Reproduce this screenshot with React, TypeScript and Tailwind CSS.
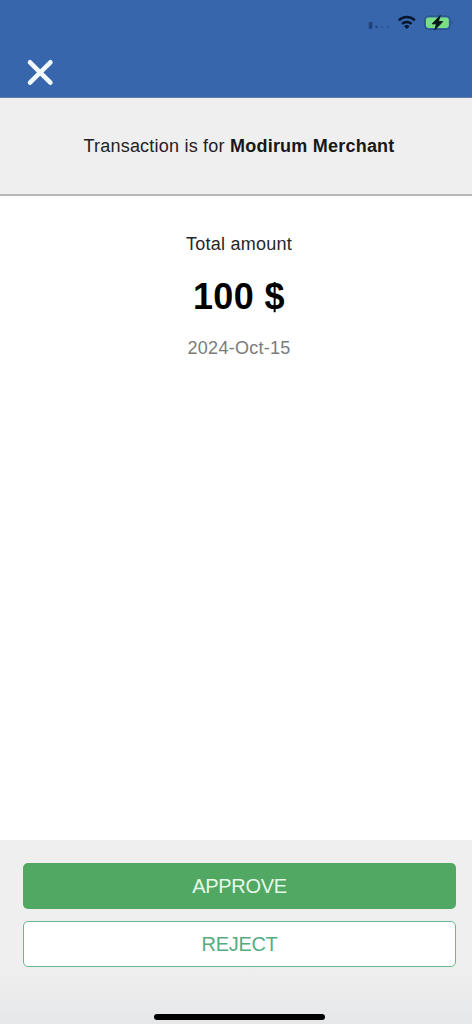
function StatusIcons() {
  return (
    <svg className="h-[46px] w-[120px]" viewBox="352 0 120 46" fill="none" aria-hidden="true">
      <g fill="#1d3c72">
        <rect x="368.8" y="22" width="3.6" height="7" rx="1" opacity=".85" />
        <circle cx="376.5" cy="27" r="1.4" opacity=".75" />
        <circle cx="382" cy="27" r="1.2" opacity=".35" />
        <circle cx="388" cy="27" r="1.2" opacity=".3" />
      </g>
      <g stroke="#08152e" strokeWidth="2.4">
        <path d="M398.8 20.3a11.4 11.4 0 0 1 16 0" />
        <path d="M402 23.9a7 7 0 0 1 9.6 0" />
      </g>
      <path d="M404.2 26.4a3.7 3.7 0 0 1 5.2 0l-2.6 2.5z" fill="#08152e" />
      <rect x="424.6" y="16" width="25.6" height="13.4" rx="4" stroke="#29517f" strokeWidth="1" />
      <path d="M451.6 20.8c1.4.5 1.4 3.4 0 3.9z" fill="#29517f" />
      <rect x="426" y="17.4" width="22.8" height="10.6" rx="2.4" fill="#78df83" />
      <path
        d="M440.2 15.6l-8 8.2h4.3l-1.7 6 7.9-8.2h-4.4z"
        fill="#07151c"
        stroke="#07151c"
        strokeWidth="1"
        strokeLinejoin="round"
      />
    </svg>
  );
}

export default function App() {
  return (
    <div className="flex h-[1024px] w-[472px] flex-col overflow-hidden bg-white font-['Liberation_Sans',Arial,sans-serif]">
      <header className="flex h-[98px] shrink-0 flex-col border-b border-[#5b7da6] bg-[#3766ad]">
        <div className="flex h-[46px] justify-end">
          <StatusIcons />
        </div>
        <button aria-label="Close" className="ml-[26px] mt-3 size-7">
          <svg viewBox="0 0 28 28" className="size-7" fill="none" stroke="#f3faff" strokeWidth="4.6" strokeLinecap="round">
            <path d="M4 4.3l20.4 20.4M24.4 4.3l-20.4 20.4" />
          </svg>
        </button>
      </header>

      <section className="flex h-[98px] shrink-0 items-center justify-center border-b-2 border-[#b8b8b8] bg-[#efefef] pl-[6px] pt-px text-[18px] tracking-[0.22px] text-[#222]">
        <p className="whitespace-nowrap">
          Transaction is for <strong className="text-[#181818]">Modirum Merchant</strong>
        </p>
      </section>

      <main className="flex grow flex-col items-center pl-[6px] pt-9">
        <p className="text-[18px] leading-6 tracking-[0.25px] text-[#262626]">Total amount</p>
        <p className="mt-[25px] text-[36px] font-bold leading-[32px] tracking-[0.4px] text-black">100 $</p>
        <p className="mt-[23px] text-[18px] leading-6 tracking-[0.25px] text-[#7b7b7b]">2024-Oct-15</p>
      </main>

      <footer className="flex h-[184px] shrink-0 flex-col bg-linear-to-b from-[#efeff0] from-70% to-[#e6e7e8] pl-[23px] pr-4 pt-[23px]">
        <button className="h-[46px] shrink-0 rounded-[5px] bg-[#51a862] text-[20px] tracking-[-0.3px] text-[#e6f8e9]">
          APPROVE
        </button>
        <button className="mt-3 h-[46px] shrink-0 rounded-[5px] border border-[#69b98a] bg-white text-[20px] tracking-[-0.3px] text-[#55ac82]">
          REJECT
        </button>
        <div className="ml-[130.5px] mt-[47px] h-[6px] w-[171px] shrink-0 rounded-full bg-black" />
      </footer>
    </div>
  );
}
